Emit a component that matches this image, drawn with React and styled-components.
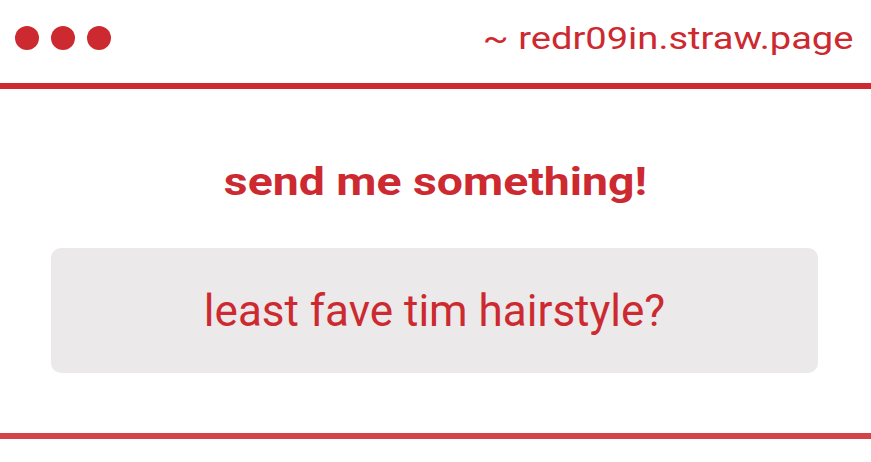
import React from "react";
import styled, { createGlobalStyle } from "styled-components";

const RED = "#cc2a30";

const GlobalStyle = createGlobalStyle`
  body {
    margin: 0;
    background: #ffffff;
    font-family: Roboto, "Liberation Sans", sans-serif;
  }
`;

const Page = styled.div`
  width: 871px;
  height: 462px;
  display: flex;
  flex-direction: column;
  overflow: hidden;
`;

const TitleBar = styled.header`
  height: 75px;
  display: flex;
  align-items: center;
  justify-content: space-between;
  padding: 0 18px 8px 15px;
  border-bottom: 6px solid ${RED};
`;

const Dots = styled.div`
  display: flex;
  gap: 12px;
`;

const Dot = styled.span`
  width: 24px;
  height: 24px;
  border-radius: 50%;
  background: ${RED};
`;

// the capture is a little wider than tall, so the text gets stretched to match
const Address = styled.span`
  color: ${RED};
  font-size: 32px;
  line-height: 1;
  transform: scaleX(1.19);
  transform-origin: right center;
`;

const Body = styled.main`
  height: 344px;
  display: flex;
  flex-direction: column;
  align-items: center;
  border-bottom: 6px solid #d3444a;
`;

const Heading = styled.h1`
  margin: 69px 0 0;
  color: ${RED};
  font-size: 38px;
  font-weight: 700;
  line-height: 48px;
  transform: scaleX(1.22);
`;

const Card = styled.div`
  margin: 42px 53px 0 51px;
  align-self: stretch;
  height: 125px;
  border-radius: 10px;
  background: #ebe9ea;
  display: flex;
  align-items: center;
  justify-content: center;
  color: ${RED};
  font-size: 44px;
`;

const App = () => (
  <Page>
    <GlobalStyle />
    <TitleBar>
      <Dots>
        <Dot />
        <Dot />
        <Dot />
      </Dots>
      <Address>~ redr09in.straw.page</Address>
    </TitleBar>
    <Body>
      <Heading>send me something!</Heading>
      <Card>least fave tim hairstyle?</Card>
    </Body>
  </Page>
);

export default App;
